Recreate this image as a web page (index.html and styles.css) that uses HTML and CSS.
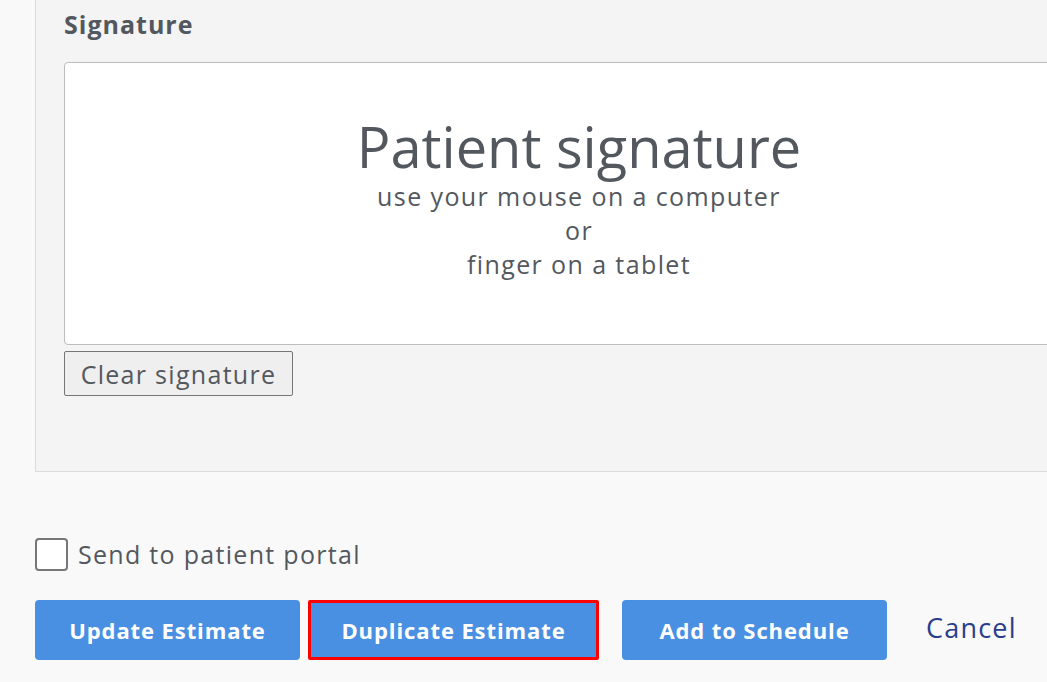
FILE: index.html
```html
<!DOCTYPE html>
<html lang="en">
<head>
  <meta charset="UTF-8">
  <meta name="viewport" content="width=device-width, initial-scale=1.0">
  <title>Estimate</title>
  <link rel="stylesheet" href="styles.css">
</head>
<body>
  <div class="page">
    <div class="panel">
      <h2 class="panel-title">Signature</h2>
      <div class="sig-pad">
        <div class="sig-title">Patient signature</div>
        <div class="sig-hint">use your mouse on a computer</div>
        <div class="sig-hint">or</div>
        <div class="sig-hint">finger on a tablet</div>
      </div>
      <button class="clear-btn">Clear signature</button>
    </div>

    <label class="portal">
      <span class="checkbox"></span>
      Send to patient portal
    </label>

    <div class="actions">
      <button class="btn">Update Estimate</button>
      <button class="btn btn-focus">Duplicate Estimate</button>
      <button class="btn">Add to Schedule</button>
      <a class="cancel" href="#">Cancel</a>
    </div>
  </div>
</body>
</html>
```

FILE: styles.css
```css
body {
  margin: 0;
  background: #f9f9f9;
  font-family: "Open Sans", Lato, sans-serif;
  color: #53585e;
  overflow: hidden;
}

.page {
  padding-left: 35px;
  width: 1200px;
}

.panel {
  background: #f4f4f4;
  border-left: 1px solid #dcdcdc;
  border-bottom: 1px solid #dcdcdc;
  padding: 8px 0 75px 28px;
}

.panel-title {
  margin: 0 0 22px;
  font-size: 25px;
  font-weight: 700;
  line-height: 32px;
  letter-spacing: 1px;
}

.sig-pad {
  width: 1030px;
  height: 283px;
  background: #fff;
  border: 1px solid #bdbdbd;
  border-radius: 4px;
  text-align: center;
  padding-top: 52px;
  box-sizing: border-box;
}

.sig-title {
  font-size: 56px;
  line-height: 62px;
  margin-bottom: 2px;
}

.sig-hint {
  font-size: 25px;
  line-height: 34px;
  letter-spacing: 1.4px;
}

.clear-btn {
  margin-top: 6px;
  width: 229px;
  height: 45px;
  padding: 0;
  background: #efefef;
  border: 1px solid #767676;
  border-radius: 2px;
  font-family: inherit;
  font-size: 25px;
  letter-spacing: 1.3px;
  color: #53585e;
}

.portal {
  display: flex;
  align-items: center;
  gap: 10px;
  margin-top: 65px;
  font-size: 25px;
  letter-spacing: 1.3px;
}

.checkbox {
  width: 29px;
  height: 29px;
  background: #fff;
  border: 2px solid #777;
  border-radius: 4px;
}

.actions {
  display: flex;
  align-items: center;
  margin-top: 29px;
}

.btn {
  height: 60px;
  width: 265px;
  margin-right: 8px;
  background: #4a90e2;
  border: 0;
  border-radius: 4px;
  color: #fff;
  font-family: inherit;
  font-size: 22px;
  font-weight: 700;
  letter-spacing: 0.9px;
}

.btn-focus {
  width: 291px;
  margin-right: 23px;
  border: 3px solid #f00;
  border-radius: 2px;
}

.cancel {
  margin-left: 31px;
  margin-bottom: 5px;
  font-size: 27px;
  letter-spacing: 1.2px;
  color: #2b3e8c;
  text-decoration: none;
}
```
